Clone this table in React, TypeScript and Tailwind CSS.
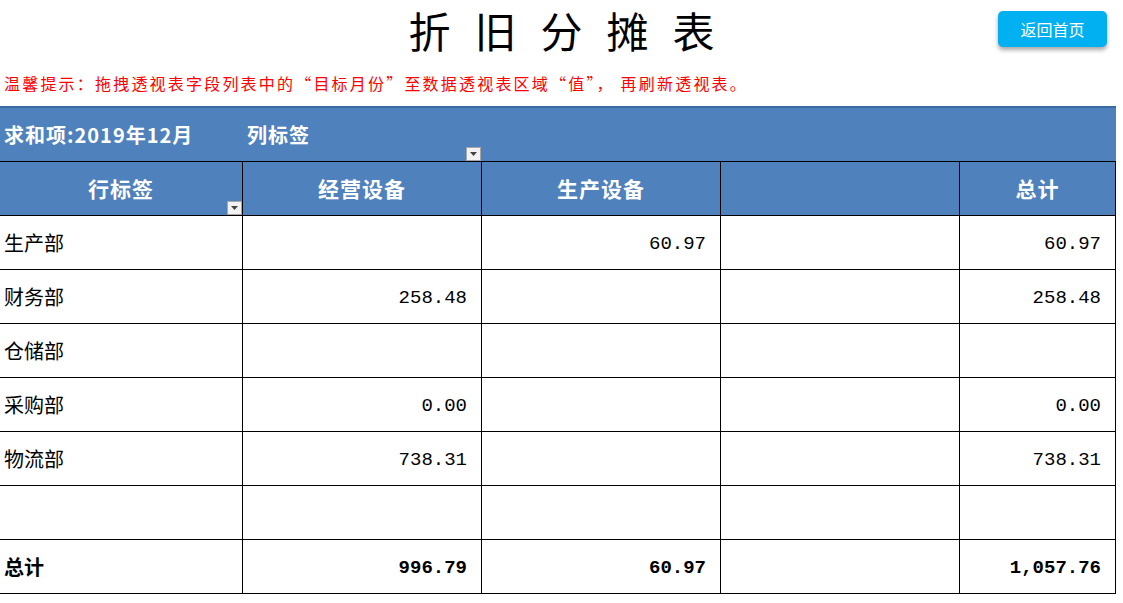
import React from "react";

const cols = "grid grid-cols-[243px_239px_239px_239px_156px] w-[1116px]";
const cjk = "font-['Noto_Sans_CJK_SC',sans-serif]";
const num = "font-['Liberation_Mono',monospace]";

type Row = { name: string; a?: string; b?: string; c?: string; t?: string };

const rows: Row[] = [
  { name: "生产部", b: "60.97", t: "60.97" },
  { name: "财务部", a: "258.48", t: "258.48" },
  { name: "仓储部" },
  { name: "采购部", a: "0.00", t: "0.00" },
  { name: "物流部", a: "738.31", t: "738.31" },
  { name: "" },
];

function Drop() {
  return (
    <div className="w-[15px] h-[14px] bg-[#f2f2f2] border border-[#a6a6a6] flex items-center justify-center">
      <svg width="7" height="4" viewBox="0 0 7 4">
        <path d="M0 0h7L3.5 4z" fill="#444" />
      </svg>
    </div>
  );
}

function NumCell({ v, bold }: { v?: string; bold?: boolean }) {
  return (
    <div
      className={`h-[54px] border-b border-r border-black flex items-center justify-end pr-[14px] pt-[4px] text-[19px] text-black ${num} ${bold ? "font-bold" : ""}`}
    >
      {v}
    </div>
  );
}

export default function App() {
  return (
    <div className={`w-[1123px] h-[603px] bg-white overflow-hidden ${cjk}`}>
      <div className="grid grid-cols-[1fr_auto_1fr] items-start h-[64px]">
        <div />
        <h1 className="text-[42px] leading-none pt-[9px] tracking-[24px] pl-[24px] text-black font-normal">
          折旧分摊表
        </h1>
        <div className="flex justify-end pr-[16px] pt-[11px]">
          <button className="w-[109px] h-[36px] rounded-[5px] bg-[#00b0f0] text-white text-[16px] shadow-[0_3px_4px_rgba(0,0,0,0.35)]">
            返回首页
          </button>
        </div>
      </div>
      <div className="h-[42px] pl-[4px] pt-[9px] text-[16px] leading-[20px] tracking-[2.2px] text-[#ff0000]">
        温馨提示：拖拽透视表字段列表中的“目标月份”至数据透视表区域“值”，&nbsp;再刷新透视表。
      </div>

      <div className="w-[1116px] border-t-2 border-[#3a6aa3]">
        <div className="h-[54px] bg-[#4f81bd] border-b border-black flex items-center relative text-white text-[20px] font-bold">
          <span className="pl-[4px] w-[247px] tracking-[1px]">求和项:2019年12月</span>
          <span className="tracking-[1px]">列标签</span>
          <div className="absolute left-[466px] bottom-[0px]">
            <Drop />
          </div>
        </div>
        <div className={`${cols} bg-[#4f81bd] text-white text-[21px] font-bold`}>
          {["行标签", "经营设备", "生产设备", "", "总计"].map((h, i) => (
            <div
              key={i}
              className="h-[54px] border-b border-r border-black flex items-center justify-center relative tracking-[1px]"
            >
              {h}
              {i === 0 && (
                <div className="absolute right-[0px] bottom-[0px]">
                  <Drop />
                </div>
              )}
            </div>
          ))}
        </div>
        {rows.map((r, i) => (
          <div key={i} className={cols}>
            <div className="h-[54px] border-b border-r border-black flex items-center pl-[4px] text-[20px] text-black">
              {r.name}
            </div>
            <NumCell v={r.a} />
            <NumCell v={r.b} />
            <NumCell v={r.c} />
            <NumCell v={r.t} />
          </div>
        ))}
        <div className={cols}>
          <div className="h-[54px] border-b border-r border-black flex items-center pl-[4px] text-[20px] font-bold text-black">
            总计
          </div>
          <NumCell v="996.79" bold />
          <NumCell v="60.97" bold />
          <NumCell />
          <NumCell v="1,057.76" bold />
        </div>
      </div>
    </div>
  );
}
